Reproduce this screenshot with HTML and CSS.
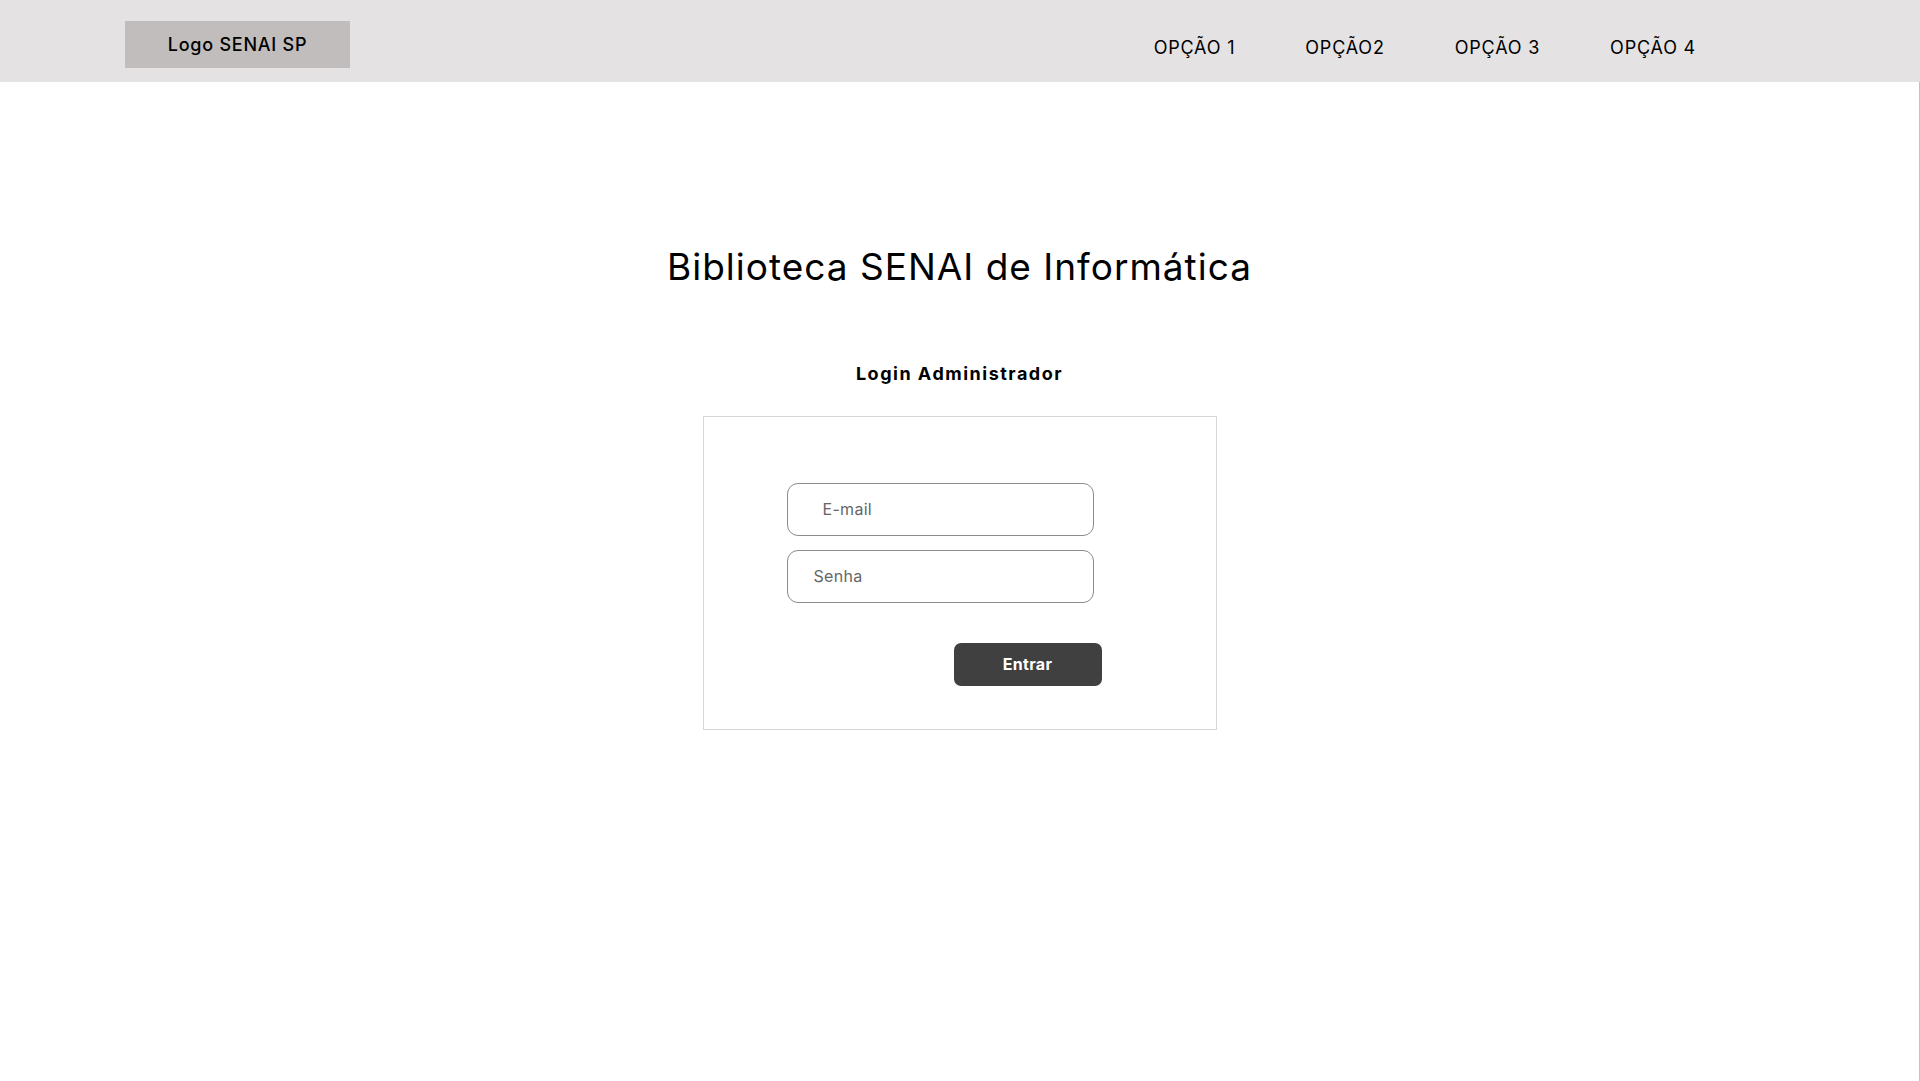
FILE: index.html
```html
<!DOCTYPE html>
<html lang="pt-BR">
<head>
<meta charset="utf-8">
<title>Biblioteca SENAI de Informática</title>
<link rel="stylesheet" href="styles.css">
</head>
<body>
<header class="topbar">
  <div class="logo">Logo SENAI SP</div>
  <nav class="nav">
    <a class="nav-link" href="#">OPÇÃO 1</a>
    <a class="nav-link" href="#">OPÇÃO2</a>
    <a class="nav-link" href="#">OPÇÃO 3</a>
    <a class="nav-link" href="#">OPÇÃO 4</a>
  </nav>
</header>
<main class="main">
  <h1 class="title">Biblioteca SENAI de Informática</h1>
  <h2 class="subtitle">Login Administrador</h2>
  <form class="card">
    <input class="field field-email" type="email" placeholder="E-mail">
    <input class="field field-pass" type="password" placeholder="Senha">
    <button class="btn" type="button">Entrar</button>
  </form>
</main>
</body>
</html>
```
FILE: styles.css
```css
* { box-sizing: border-box; }
html, body { margin: 0; padding: 0; }
body {
  font-family: Inter, "Noto Sans", sans-serif;
  color: #000;
  background: #fff;
  width: 1920px;
  height: 1081px;
  overflow: hidden;
}
.topbar {
  height: 82px;
  background: #e4e2e3;
  display: flex;
  align-items: flex-start;
}
.logo {
  margin-left: 125px;
  margin-top: 21px;
  width: 225px;
  height: 47px;
  background: #c0bdbc;
  display: flex;
  align-items: center;
  justify-content: center;
  font-size: 18px;
  font-weight: 500;
  line-height: 1;
  letter-spacing: 0.75px;
  padding-top: 1px;
}
.nav {
  margin-left: auto;
  margin-right: 224px;
  margin-top: 39px;
  display: flex;
  gap: 70px;
}
.nav-link {
  color: #000;
  text-decoration: none;
  font-size: 18px;
  line-height: 18px;
  letter-spacing: 0.8px;
}
.main {
  height: 999px;
  border-right: 1px solid #c3c3c3;
  display: flex;
  flex-direction: column;
  align-items: center;
}
.title {
  margin: 166px 0 0;
  font-size: 37px;
  line-height: 37px;
  font-weight: 400;
  letter-spacing: 1px;
}
.subtitle {
  margin: 80px 0 0;
  font-size: 18px;
  line-height: 18px;
  font-weight: 700;
  letter-spacing: 1.5px;
}
.card {
  margin: 33px 0 0;
  width: 514px;
  height: 314px;
  border: 1px solid #d6d6d6;
  padding: 66px 0 0 83px;
  display: flex;
  flex-direction: column;
  align-items: flex-start;
}
.field {
  width: 307px;
  height: 53px;
  border: 1px solid #8c8c8c;
  border-radius: 11px;
  font-family: Inter, "Noto Sans", sans-serif;
  font-size: 16px;
  letter-spacing: 0.3px;
  color: #333;
  background: #fff;
  outline: none;
  margin: 0;
  padding-bottom: 2px;
}
.field::placeholder { color: #666; }
.field-email { padding-left: 35px; padding-right: 0; padding-top: 0; }
.field-pass { padding-left: 26px; padding-right: 0; padding-top: 0; margin-top: 14px; }
.btn {
  margin-top: 40px;
  margin-left: 167px;
  width: 148px;
  height: 43px;
  border: none;
  border-radius: 7px;
  background: #404040;
  color: #fff;
  font-family: Inter, "Noto Sans", sans-serif;
  font-size: 16px;
  font-weight: 700;
  letter-spacing: 0.3px;
  padding: 0 0 2px;
}
```
